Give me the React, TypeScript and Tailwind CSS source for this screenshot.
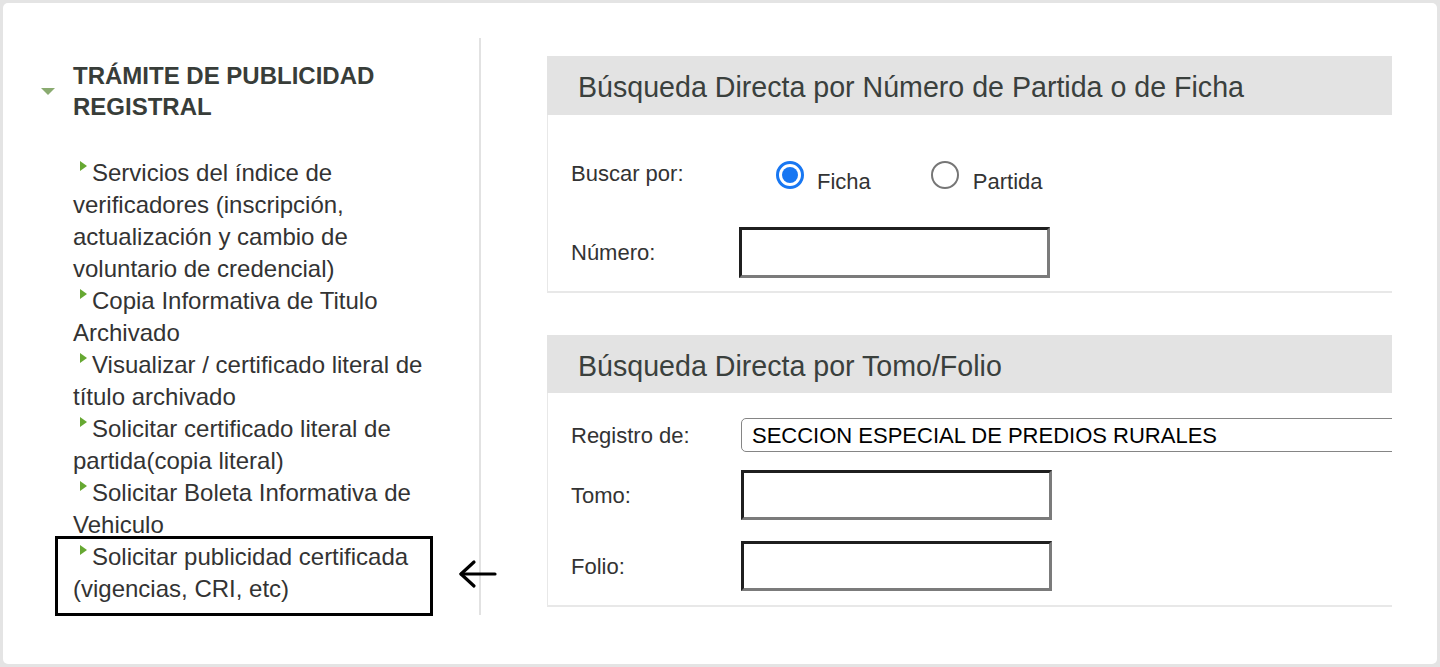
import React from "react";

const items = [
  "Servicios del índice de verificadores (inscripción, actualización y cambio de voluntario de credencial)",
  "Copia Informativa de Titulo Archivado",
  "Visualizar / certificado literal de título archivado",
  "Solicitar certificado literal de partida(copia literal)",
  "Solicitar Boleta Informativa de Vehiculo",
];

function Bullet() {
  return (
    <svg className="inline-block align-top mt-[4px] ml-[7px] mr-[5px]" width="7" height="10" viewBox="0 0 7 10">
      <polygon points="0,0 7,5 0,10" fill="#66a832" />
    </svg>
  );
}

function TextInput({ w = "w-[311px]", h = "h-[51px]" }: { w?: string; h?: string }) {
  return (
    <div
      className={`${w} ${h} shrink-0 bg-white border-[3px] border-t-[#1f1f1f] border-l-[#1f1f1f] border-r-[#7b7b7b] border-b-[#7b7b7b]`}
    />
  );
}

export default function App() {
  return (
    <div className="w-[1440px] h-[667px] bg-[#e4e4e4] p-[3px] font-['Liberation_Sans',Arial,sans-serif]">
      <div className="h-full bg-white rounded-[5px] flex items-start pt-[35px]">
        {/* Sidebar */}
        <div className="w-[478px] h-[577px] shrink-0 border-r-2 border-[#e2e2e2] pl-[38px] pt-[22px]">
          <div className="flex items-center gap-[18px]">
            <svg className="shrink-0" width="14" height="7" viewBox="0 0 14 7">
              <polygon points="0,0 14,0 7,7" fill="#8aab70" />
            </svg>
            <h2 className="w-[377px] text-[24px] leading-[31px] font-bold text-[#383d39]">
              TRÁMITE DE PUBLICIDAD REGISTRAL
            </h2>
          </div>
          <ul className="mt-[35px] ml-[32px] w-[377px] text-[24px] leading-[32px] text-[#333333]">
            {items.map((t) => (
              <li key={t}>
                <Bullet />
                {t}
              </li>
            ))}
            <li className="relative">
              <Bullet />
              Solicitar publicidad certificada (vigencias, CRI, etc)
              <div className="absolute left-[-18px] right-[17px] top-[-5px] bottom-[-11px] border-[3px] border-black pointer-events-none" />
              <svg
                className="absolute left-[385px] top-[17px]"
                width="40"
                height="34"
                viewBox="0 0 40 34"
                fill="none"
                stroke="#000"
                strokeWidth="3.2"
                strokeLinecap="round"
                strokeLinejoin="round"
              >
                <path d="M3 16h34" />
                <path d="M16 4L3 16l13 12" />
              </svg>
            </li>
          </ul>
        </div>

        {/* Right column */}
        <div className="ml-[66px] w-[845px] shrink-0 overflow-hidden pt-[18px]">
          {/* Panel 1 */}
          <div>
            <div className="h-[59px] bg-[#e3e3e3] pl-[31px] pt-[4px] flex items-center text-[28.6px] text-[#3a403d] whitespace-nowrap">
              Búsqueda Directa por Número de Partida o de Ficha
            </div>
            <div className="border-l border-b-2 border-[#e8e8e8] pl-[23px] pt-[46px] pb-[13px] text-[22px] text-[#333333]">
              <div className="flex items-center h-[28px]">
                <span className="w-[205px] shrink-0 mt-[-4px]">Buscar por:</span>
                <span className="w-[28px] h-[28px] shrink-0 rounded-full border-[3px] border-[#1877f2] flex items-center justify-center">
                  <span className="w-[16px] h-[16px] rounded-full bg-[#1877f2]" />
                </span>
                <span className="ml-[13px] mt-[12px]">Ficha</span>
                <span className="ml-[60px] w-[28px] h-[28px] shrink-0 rounded-full border-2 border-[#767676]" />
                <span className="ml-[14px] mt-[12px]">Partida</span>
              </div>
              <div className="flex items-center mt-[38px]">
                <span className="w-[168px] shrink-0">Número:</span>
                <TextInput />
              </div>
            </div>
          </div>

          {/* Panel 2 */}
          <div className="mt-[42px]">
            <div className="h-[58px] bg-[#e3e3e3] pl-[31px] pt-[4px] flex items-center text-[28.6px] text-[#3a403d] whitespace-nowrap">
              Búsqueda Directa por Tomo/Folio
            </div>
            <div className="border-l border-b-2 border-[#e8e8e8] pl-[23px] pt-[25px] pb-[14px] text-[22px] text-[#333333]">
              <div className="flex items-center">
                <span className="w-[170px] shrink-0 whitespace-nowrap">Registro de:</span>
                <div className="w-[800px] shrink-0 h-[34px] border-[1.5px] border-[#858585] rounded-[5px] pl-[10px] flex items-center text-black whitespace-nowrap">
                  SECCION ESPECIAL DE PREDIOS RURALES
                </div>
              </div>
              <div className="flex items-center mt-[18px]">
                <span className="w-[170px] shrink-0">Tomo:</span>
                <TextInput h="h-[50px]" />
              </div>
              <div className="flex items-center mt-[21px]">
                <span className="w-[170px] shrink-0">Folio:</span>
                <TextInput h="h-[50px]" />
              </div>
            </div>
          </div>
        </div>
      </div>
    </div>
  );
}
